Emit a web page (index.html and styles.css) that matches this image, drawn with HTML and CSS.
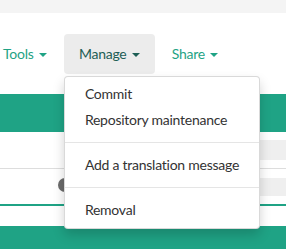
FILE: index.html
```html
<!DOCTYPE html>
<html>
<head>
<meta charset="utf-8">
<link rel="stylesheet" href="styles.css">
</head>
<body>
<div class="topbar"></div>
<ul class="nav">
  <li class="nav-item"><a class="nav-link">Tools <span class="caret"></span></a></li>
  <li class="nav-item open">
    <a class="nav-link active">Manage <span class="caret"></span></a>
    <ul class="dropdown-menu">
      <li><a>Commit</a></li>
      <li><a>Repository maintenance</a></li>
      <li class="divider"></li>
      <li><a>Add a translation message</a></li>
      <li class="divider"></li>
      <li><a>Removal</a></li>
    </ul>
  </li>
  <li class="nav-item"><a class="nav-link">Share <span class="caret"></span></a></li>
</ul>
<div class="band"></div>
<div class="row row-one">
  <div class="input-box"></div>
</div>
<div class="row row-two">
  <span class="toggle"></span>
  <div class="grey-box"></div>
</div>
<div class="spacer"></div>
<div class="band-bottom"></div>
</body>
</html>
```
FILE: styles.css
```css
* { box-sizing: border-box; }
html, body { margin: 0; padding: 0; }
body {
  font-family: "Lato", "Noto Sans", sans-serif;
  font-size: 14px;
  line-height: 20px;
  letter-spacing: -0.25px;
  color: #333;
  background: #fff;
  width: 286px;
  height: 249px;
  overflow: hidden;
}
.topbar { height: 13px; background: #f4f4f4; }
.nav {
  list-style: none;
  margin: 21px 0 0 -12px;
  padding: 0;
  display: flex;
  gap: 2px;
  height: 40px;
}
.nav-item { position: relative; }
.nav-link {
  display: block;
  padding: 10px 15px;
  color: #1fa385;
  border-radius: 4px;
  white-space: nowrap;
}
.nav-link.active { background: #ececec; color: #1d5e55; }
.caret {
  display: inline-block;
  width: 0; height: 0;
  margin-left: 2px;
  vertical-align: middle;
  border-top: 4px solid currentColor;
  border-left: 4px solid transparent;
  border-right: 4px solid transparent;
}
.dropdown-menu {
  position: absolute;
  top: 100%;
  left: 0;
  z-index: 10;
  width: 196px;
  margin: 2px 0 0;
  padding: 4px 0 5px;
  list-style: none;
  background: #fff;
  border: 1px solid rgba(0,0,0,.15);
  border-radius: 4px;
  box-shadow: 0 6px 12px rgba(0,0,0,.175);
}
.dropdown-menu a {
  display: block;
  padding: 3px 20px;
  color: #333;
  white-space: nowrap;
}
.dropdown-menu .divider { height: 1px; margin: 9px 0; background: #e5e5e5; }
.band { margin-top: 20px; height: 38px; background: #1fa385; }
.row { position: relative; display: flex; align-items: center; justify-content: flex-end; }
.row-one { height: 37px; border-bottom: 1px solid #dddddd; }
.input-box { width: 28px; height: 20px; background: #efefef; border-left: 2px solid #d9534f; }
.row-two { height: 37px; border-bottom: 2px solid #1fa385; }
.grey-box { width: 28px; height: 18px; background: #efefef; }
.toggle {
  position: absolute;
  left: 58px;
  top: 9px;
  width: 14px; height: 14px;
  border-radius: 50%;
  background: #6b6b6b;
}
.spacer { height: 20px; }
.band-bottom { height: 30px; background: #1fa385; }
```
